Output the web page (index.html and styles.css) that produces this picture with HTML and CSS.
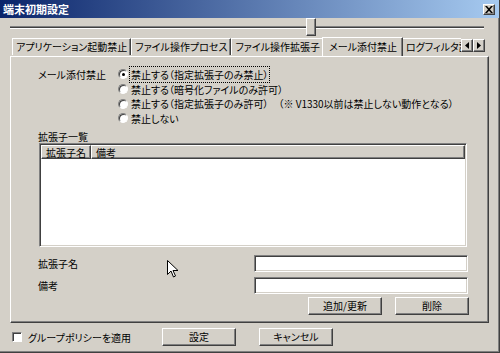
FILE: index.html
```html
<!DOCTYPE html>
<html lang="ja">
<head>
  <meta charset="UTF-8">
  <title>端末初期設定</title>
  <link rel="stylesheet" href="styles.css">
</head>
<body>
  <div class="window">
    <div class="titlebar">
      <span class="title">端末初期設定</span>
      <span class="close">
        <svg width="8" height="7" viewBox="0 0 8 7"><path d="M0 0h2l2 2.2L6 0h2L5 3.5 8 7H6L4 4.8 2 7H0l3-3.5z" fill="#000"/></svg>
      </span>
    </div>

    <div class="slider">
      <div class="groove"></div>
      <div class="thumb"></div>
    </div>

    <div class="tabstrip">
      <div class="tabs">
        <span class="tab">アプリケーション起動禁止</span>
        <span class="tab">ファイル操作プロセス</span>
        <span class="tab">ファイル操作拡張子</span>
        <span class="tab active">メール添付禁止</span>
        <span class="tab">ログフィルタ設定</span>
      </div>
      <span class="arrow"><svg width="4" height="7" viewBox="0 0 4 7"><path d="M4 0v7L0 3.5z"/></svg></span>
      <span class="arrow"><svg width="4" height="7" viewBox="0 0 4 7"><path d="M0 0v7l4-3.5z"/></svg></span>
    </div>

    <div class="panel">
      <div class="mail-block">
        <div class="mail-label">メール添付禁止</div>
        <div class="radios">
          <div class="radio-row"><span class="radio checked"></span><span class="focus">禁止する（指定拡張子のみ禁止）</span></div>
          <div class="radio-row"><span class="radio"></span><span>禁止する（暗号化ファイルのみ許可）</span></div>
          <div class="radio-row"><span class="radio"></span><span>禁止する（指定拡張子のみ許可）　（※ V1330以前は禁止しない動作となる）</span></div>
          <div class="radio-row"><span class="radio"></span><span>禁止しない</span></div>
        </div>
      </div>

      <div class="list-caption">拡張子一覧</div>
      <div class="list">
        <div class="list-head">
          <span class="col col-ext">拡張子名</span>
          <span class="col col-note">備考</span>
        </div>
      </div>

      <div class="form-grid">
        <label class="form-label">拡張子名</label>
        <input class="field" type="text">
        <label class="form-label">備考</label>
        <input class="field" type="text">
      </div>

      <div class="panel-buttons">
        <button class="btn">追加/更新</button>
        <button class="btn">削除</button>
      </div>
    </div>

    <div class="footer">
      <label class="check-label"><span class="checkbox"></span>グループポリシーを適用</label>
      <button class="btn">設定</button>
      <button class="btn">キャンセル</button>
    </div>

    <!-- マウスカーソル -->
    <svg class="cursor" width="11" height="18" viewBox="0 0 11 18">
      <path d="M0.5 0.5v14l3.5-3.5 2.5 6 2-1-2.5-5.5h5z" fill="#fff" stroke="#000" stroke-width="1"/>
    </svg>
  </div>
</body>
</html>
```

FILE: styles.css
```css
body {
  margin: 0;
  font-family: "Noto Sans CJK JP", sans-serif;
  font-size: 10px;
  font-feature-settings: "palt";
  color: #000;
  background: #d4d0c8;
}

.window {
  position: relative;
  width: 500px;
  height: 353px;
  box-sizing: border-box;
  background: #d4d0c8;
  border-right: 1px solid #404040;
  border-bottom: 1px solid #404040;
  box-shadow: inset -1px -1px #808080;
  display: flex;
  flex-direction: column;
  overflow: hidden;
}

/* タイトルバー */
.titlebar {
  height: 18px;
  flex: none;
  background: linear-gradient(to right, #0a246a, #a6caf0);
  display: flex;
  align-items: center;
  justify-content: space-between;
  padding: 0 4px 0 3px;
}

.title {
  color: #fff;
  font-weight: bold;
  font-size: 11px;
  line-height: 1;
}

.close {
  width: 10px;
  height: 9px;
  background: #d4d0c8;
  border: 1px solid;
  border-color: #fff #404040 #404040 #fff;
  box-shadow: inset -1px -1px #808080;
  display: flex;
  align-items: center;
  justify-content: center;
}

/* スライダー */
.slider {
  position: relative;
  height: 19px;
  margin: 0 15px 0 10px;
  flex: none;
}

.groove {
  margin-top: 8px;
  height: 1px;
  border-top: 1px solid #808080;
  border-bottom: 1px solid #fff;
  background: #404040;
}

.thumb {
  position: absolute;
  left: 296px;
  top: 0;
  width: 8px;
  height: 16px;
  background: #d4d0c8;
  border: 1px solid;
  border-color: #fff #404040 #404040 #fff;
  box-shadow: inset -1px -1px #808080;
}

/* タブ */
.tabstrip {
  height: 19px;
  flex: none;
  display: flex;
  align-items: flex-start;
  padding-left: 12px;
  padding-right: 14px;
  position: relative;
  z-index: 1;
}

.tabs {
  flex: 1;
  display: flex;
  align-items: flex-end;
  height: 20px;
  overflow: hidden;
  margin-top: -1px;
}

.tab {
  height: 16px;
  line-height: 16px;
  padding: 0 3px;
  border-top: 1px solid #fff;
  border-left: 1px solid #fff;
  border-right: 1px solid #404040;
  box-shadow: inset -1px 0 #808080;
  white-space: nowrap;
  margin-bottom: 1px;
}

.tab.active {
  height: 19px;
  line-height: 18px;
  margin: 0 -1px -1px -2px;
  padding: 0 5px 0 6px;
  background: #d4d0c8;
  position: relative;
}

.arrow {
  width: 10px;
  height: 11px;
  margin-top: 2px;
  background: #d4d0c8;
  border: 1px solid;
  border-color: #fff #404040 #404040 #fff;
  box-shadow: inset -1px -1px #808080;
  display: flex;
  align-items: center;
  justify-content: center;
}

/* パネル */
.panel {
  height: 267px;
  box-sizing: border-box;
  margin: 0 10px;
  border: 1px solid;
  border-color: #fff #404040 #404040 #fff;
  box-shadow: inset -1px -1px #808080;
  flex: none;
}

.mail-block {
  display: flex;
  margin: 10px 0 0 27px;
}

.mail-label {
  width: 80px;
  line-height: 15px;
}

.radio-row {
  display: flex;
  align-items: center;
  height: 14.7px;
  white-space: nowrap;
}

.radio {
  width: 8px;
  height: 8px;
  margin-right: 3px;
  border-radius: 50%;
  border: 1px solid;
  border-color: #808080 #fff #fff #808080;
  background: #fff;
  box-shadow: inset 1px 1px #404040;
  display: flex;
  align-items: center;
  justify-content: center;
}

.radio.checked::after {
  content: "";
  width: 3px;
  height: 3px;
  border-radius: 50%;
  background: #000;
}

.focus {
  outline: 1px dotted #000;
  outline-offset: 0;
  padding: 0 1px;
  margin-left: -1px;
}

.list-caption {
  margin: 4px 0 0 27px;
  height: 13px;
  line-height: 13px;
}

.list {
  margin-left: 28px;
  width: 428px;
  height: 104px;
  box-sizing: border-box;
  background: #fff;
  border: 1px solid;
  border-color: #808080 #fff #fff #808080;
  box-shadow: inset 1px 1px #404040, inset -1px -1px #d4d0c8;
  padding: 1px;
}

.list-head {
  display: flex;
  height: 14px;
  background: #d4d0c8;
}

.col {
  box-sizing: border-box;
  height: 14px;
  line-height: 13px;
  border: 1px solid;
  border-color: #fff #404040 #404040 #fff;
  box-shadow: inset -1px -1px #808080;
  padding-left: 4px;
}

.col-ext {
  width: 50px;
}

.col-note {
  flex: 1;
}

.form-grid {
  display: grid;
  grid-template-columns: 216px 214px;
  row-gap: 5px;
  margin: 8px 0 0 27px;
  align-items: center;
}

.form-label {
  line-height: 17px;
}

.field {
  height: 17px;
  box-sizing: border-box;
  margin: 0;
  padding: 0 2px;
  font: inherit;
  background: #fff;
  border: 1px solid;
  border-color: #808080 #fff #fff #808080;
  box-shadow: inset 1px 1px #404040, inset -1px -1px #d4d0c8;
  outline: none;
}

.panel-buttons {
  display: flex;
  justify-content: flex-end;
  gap: 13px;
  margin: 3px 19px 0 0;
}

.btn {
  width: 74px;
  height: 18px;
  box-sizing: border-box;
  padding: 0;
  margin: 0;
  font: inherit;
  line-height: 14px;
  color: #000;
  background: #d4d0c8;
  border: 1px solid;
  border-color: #fff #404040 #404040 #fff;
  box-shadow: inset -1px -1px #808080;
}

/* 下部 */
.footer {
  display: flex;
  align-items: flex-start;
  padding: 5px 0 0 12px;
}

.check-label {
  width: 150px;
  display: flex;
  align-items: center;
  height: 18px;
  white-space: nowrap;
}

.checkbox {
  width: 8px;
  height: 8px;
  margin-right: 6px;
  background: #fff;
  border: 1px solid;
  border-color: #808080 #fff #fff #808080;
  box-shadow: inset 1px 1px #404040;
}

.footer .btn + .btn {
  margin-left: 23px;
}

.cursor {
  position: absolute;
  left: 167px;
  top: 260px;
}
```
